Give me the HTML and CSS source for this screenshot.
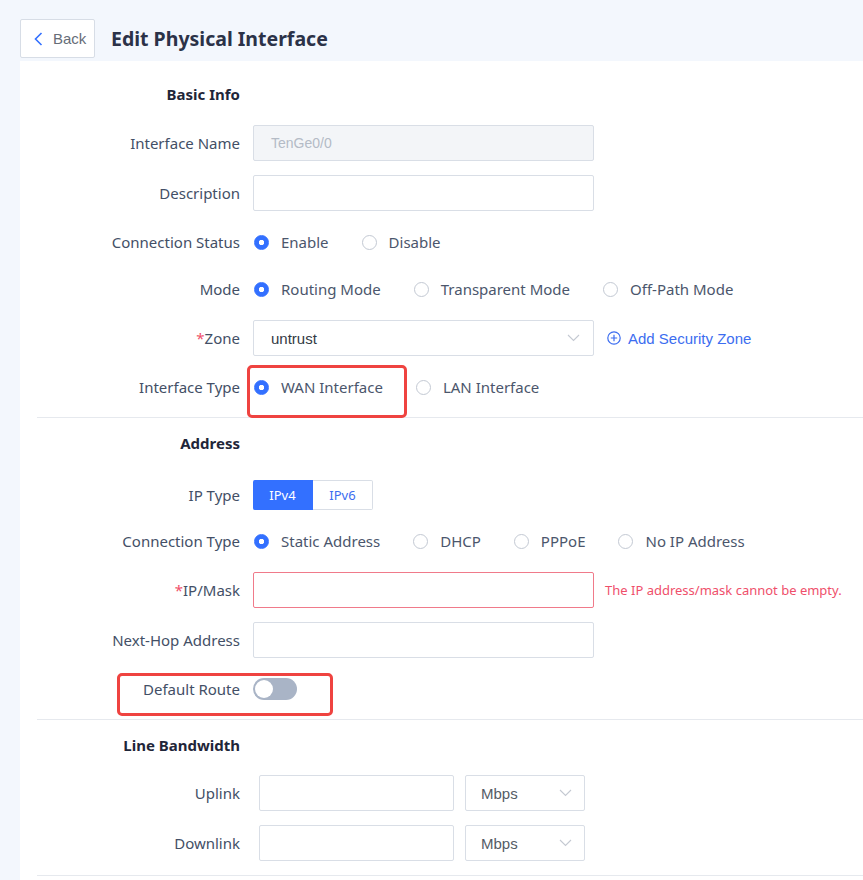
FILE: index.html
```html
<!DOCTYPE html>
<html>
<head>
<meta charset="utf-8">
<title>Edit Physical Interface</title>
<link rel="stylesheet" href="styles.css">
</head>
<body>
<header class="topbar">
  <button class="back">
    <svg class="back-icon" width="9" height="14" viewBox="0 0 9 14"><polyline points="7.5,1 1.5,7 7.5,13" fill="none" stroke="#3370ff" stroke-width="1.6"/></svg>
    <span>Back</span>
  </button>
  <h1 class="title">Edit Physical Interface</h1>
</header>

<main class="panel">
  <section class="section first">
    <div class="row"><div class="label heading">Basic Info</div></div>
    <div class="row">
      <div class="label">Interface Name</div>
      <div class="input disabled">TenGe0/0</div>
    </div>
    <div class="row push1">
      <div class="label">Description</div>
      <div class="input"></div>
    </div>
    <div class="row">
      <div class="label">Connection Status</div>
      <div class="options">
        <span class="opt"><span class="radio on"></span>Enable</span>
        <span class="opt"><span class="radio"></span>Disable</span>
      </div>
    </div>
    <div class="row pull2">
      <div class="label">Mode</div>
      <div class="options">
        <span class="opt"><span class="radio on"></span>Routing Mode</span>
        <span class="opt"><span class="radio"></span>Transparent Mode</span>
        <span class="opt"><span class="radio"></span>Off-Path Mode</span>
      </div>
    </div>
    <div class="row">
      <div class="label"><span class="req">*</span>Zone</div>
      <div class="input select"><span class="val">untrust</span>
        <svg class="chev" width="13" height="8" viewBox="0 0 13 8"><polyline points="1,1 6.5,6.5 12,1" fill="none" stroke="#c4c9d2" stroke-width="1.1"/></svg>
      </div>
      <span class="add-link">
        <svg width="14" height="14" viewBox="0 0 14 14"><circle cx="7" cy="7" r="6.2" fill="none" stroke="#3c6df0" stroke-width="1.2"/><path d="M7 3.8v6.4M3.8 7h6.4" stroke="#3c6df0" stroke-width="1.2"/></svg>
        Add Security Zone
      </span>
    </div>
    <div class="row">
      <div class="label">Interface Type</div>
      <div class="options">
        <span class="opt"><span class="radio on"></span>WAN Interface</span>
        <span class="opt"><span class="radio"></span>LAN Interface</span>
      </div>
    </div>
  </section>

  <section class="section">
    <div class="row"><div class="label heading">Address</div></div>
    <div class="row row-seg">
      <div class="label">IP Type</div>
      <div class="seg">
        <span class="seg-item active">IPv4</span>
        <span class="seg-item">IPv6</span>
      </div>
    </div>
    <div class="row">
      <div class="label">Connection Type</div>
      <div class="options">
        <span class="opt"><span class="radio on"></span>Static Address</span>
        <span class="opt"><span class="radio"></span>DHCP</span>
        <span class="opt"><span class="radio"></span>PPPoE</span>
        <span class="opt"><span class="radio"></span>No IP Address</span>
      </div>
    </div>
    <div class="row">
      <div class="label"><span class="req">*</span>IP/Mask</div>
      <div class="input error"></div>
      <span class="err-msg">The IP address/mask cannot be empty.</span>
    </div>
    <div class="row push1">
      <div class="label">Next-Hop Address</div>
      <div class="input"></div>
    </div>
    <div class="row">
      <div class="label">Default Route</div>
      <span class="switch"><span class="knob"></span></span>
    </div>
  </section>

  <section class="section last">
    <div class="row"><div class="label heading">Line Bandwidth</div></div>
    <div class="row pull1">
      <div class="label">Uplink</div>
      <div class="input bw"></div>
      <div class="input select unit"><span class="val unit-val">Mbps</span>
        <svg class="chev" width="13" height="8" viewBox="0 0 13 8"><polyline points="1,1 6.5,6.5 12,1" fill="none" stroke="#c4c9d2" stroke-width="1.1"/></svg>
      </div>
    </div>
    <div class="row push1">
      <div class="label">Downlink</div>
      <div class="input bw"></div>
      <div class="input select unit"><span class="val unit-val">Mbps</span>
        <svg class="chev" width="13" height="8" viewBox="0 0 13 8"><polyline points="1,1 6.5,6.5 12,1" fill="none" stroke="#c4c9d2" stroke-width="1.1"/></svg>
      </div>
    </div>
  </section>
</main>

<div class="mark mark-wan"></div>
<div class="mark mark-route"></div>
</body>
</html>
```
FILE: styles.css
```css
html, body {
  margin: 0;
  padding: 0;
}
body {
  background: #f3f7fd;
  font-family: "Noto Sans", "Open Sans", sans-serif;
  font-size: 15px;
  color: #434f66;
  overflow: hidden;
  height: 880px;
}
.topbar {
  display: flex;
  align-items: flex-start;
  padding: 19px 0 0 20px;
  height: 61px;
  box-sizing: border-box;
}
.back {
  display: flex;
  align-items: center;
  gap: 10px;
  height: 39px;
  width: 75px;
  padding: 0 0 0 13px;
  box-sizing: border-box;
  background: #fff;
  border: 1px solid #d7dde6;
  border-radius: 2px;
  font-family: "Liberation Sans", Arial, sans-serif;
  font-size: 15px;
  color: #666d78;
}
.title {
  margin: 0 0 0 16px;
  line-height: 39px;
  font-size: 19.5px;
  font-weight: 700;
  color: #2b3248;
}
.panel {
  background: #fff;
  margin-left: 20px;
  height: 819px;
}
.section {
  margin-left: 17px;
  padding: 7px 0 12px;
  border-bottom: 1px solid #e6e9ee;
  display: flex;
  flex-direction: column;
  gap: 13px;
}
.section.first {
  padding-top: 15px;
}
.section.last {
  padding-bottom: 14px;
}
.row {
  display: flex;
  align-items: center;
  height: 36px;
}
.push1 {
  margin-top: 1px;
}
.pull1 {
  margin-top: -1px;
}
.pull2 {
  margin-top: -2px;
}
.row-seg {
  height: 30px;
  margin-top: 6px;
}
.label {
  width: 203px;
  flex: none;
  text-align: right;
  margin-right: 13px;
  white-space: nowrap;
}
.heading {
  font-weight: 700;
  color: #1f2639;
}
.req {
  color: #f0506a;
}
.input {
  width: 341px;
  height: 36px;
  box-sizing: border-box;
  border: 1px solid #d9dee6;
  border-radius: 2px;
  background: #fff;
  display: flex;
  align-items: center;
  padding: 0 13px 0 17px;
  font-family: "Liberation Sans", Arial, sans-serif;
  font-size: 15px;
  color: #333a44;
}
.input.disabled {
  background: #f3f5f8;
  color: #b4bbc6;
  font-size: 14px;
}
.input.error {
  border-color: #f07a8a;
}
.select {
  justify-content: space-between;
}
.add-link {
  display: flex;
  align-items: center;
  gap: 7px;
  margin-left: 13px;
  font-family: "Liberation Sans", Arial, sans-serif;
  font-size: 15px;
  color: #3c6df0;
}
.options {
  display: flex;
  align-items: center;
  gap: 32px;
}
.opt {
  display: flex;
  align-items: center;
  gap: 12px;
  color: #4b566c;
}
.radio {
  width: 15px;
  height: 15px;
  box-sizing: border-box;
  border-radius: 50%;
  border: 1px solid #c3c9d3;
  background: #fff;
  margin-left: 1px;
}
.radio.on {
  border-color: #3370ff;
  background: radial-gradient(circle, #fff 0 2.4px, #3370ff 3px);
}
.seg {
  display: flex;
  height: 30px;
}
.seg-item {
  width: 60px;
  height: 30px;
  box-sizing: border-box;
  display: flex;
  align-items: center;
  justify-content: center;
  font-size: 13px;
  color: #3c6df0;
  border: 1px solid #d9dee6;
  border-left: none;
  border-radius: 0 2px 2px 0;
}
.seg-item.active {
  background: #3370ff;
  border-color: #3370ff;
  color: #fff;
  border-radius: 2px 0 0 2px;
}
.err-msg {
  margin-left: 11px;
  font-size: 13px;
  color: #ef4f6b;
}
.switch {
  width: 44px;
  height: 22px;
  border-radius: 11px;
  background: #a9b4c6;
  padding: 2px;
  box-sizing: border-box;
  display: flex;
}
.knob {
  width: 18px;
  height: 18px;
  border-radius: 50%;
  background: #fff;
}
.input.bw {
  width: 195px;
  margin-left: 6px;
}
.input.unit {
  width: 120px;
  margin-left: 11px;
  padding-left: 15px;
  padding-right: 12px;
  color: #555c66;
}
.mark {
  position: absolute;
  border: 3px solid #ef4340;
  border-radius: 5px;
  box-sizing: border-box;
}
.mark-wan {
  left: 247px;
  top: 365px;
  width: 160px;
  height: 53px;
}
.mark-route {
  left: 117px;
  top: 673px;
  width: 216px;
  height: 43px;
}
```
